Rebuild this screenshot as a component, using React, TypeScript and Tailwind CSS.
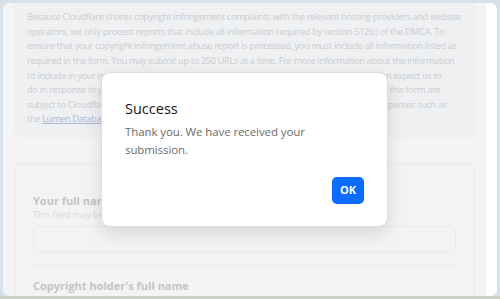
import React from 'react';

const INFO_LINES = [
  'Because Cloudflare shares copyright infringement complaints with the relevant hosting providers and website',
  'operators, we only process reports that include all information required by section 512(c) of the DMCA. To',
  'ensure that your copyright infringement abuse report is processed, you must include all information listed as',
  'required in the form. You may submit up to 250 URLs at a time. For more information about the information',
  'to include in your report, please do review our abuse reporting guidelines, and what you can expect us to',
  'do in response to your copyright complaint. Please note that all submissions made through this form are',
  "subject to Cloudflare's Privacy Policy, and they may also be shared with other relevant third parties such as",
];

function SuccessModal() {
  return (
    <div className="w-[287px] h-[155px] bg-white rounded-[9px] border border-[#dcdcdc] shadow-[0_6px_18px_rgba(0,0,0,0.12)] px-[23px] pt-[26px] pb-[22px] flex flex-col">
      <h2 className="text-[14.5px] leading-[20px] font-medium text-[#161616]">Success</h2>
      <p className="mt-[4px] text-[11.5px] leading-[18px] tracking-[-0.1px] text-[#6c6c6c]">
        Thank you. We have received your submission.
      </p>
      <div className="mt-auto flex justify-end">
        <button className="w-[32px] h-[27px] rounded-[5px] bg-[#0b6cff] text-white text-[11px] font-bold">
          OK
        </button>
      </div>
    </div>
  );
}

export default function App() {
  return (
    <div className="w-[500px] h-[299px] bg-[#d8e1ea] flex flex-col overflow-hidden font-['Open_Sans',sans-serif]">
      <div className="mt-[3px] mx-[3px] h-[293px] rounded-[7px] bg-white flex overflow-hidden">
        {/* Scroll area under the backdrop */}
        <div className="relative w-[483px] bg-[#f4f4f5] px-[11px] flex flex-col gap-[25px] overflow-hidden">
          {/* Info box */}
          <div className="shrink-0 bg-[#eff0f2] rounded-b-[8px] pl-[13px] pr-[8px] pt-[7px] pb-[11px] text-[9.2px] leading-[14.64px] tracking-[-0.33px] text-[#cbcdd1] whitespace-nowrap overflow-hidden">
            {INFO_LINES.map(line => (
              <div key={line}>{line}</div>
            ))}
            <div>
              the <span className="underline text-[#a9b7d5]">Lumen Database</span>.
            </div>
          </div>

          {/* Form card */}
          <div className="shrink-0 bg-[#f3f3f3] border border-[#ebebeb] rounded-[8px] px-[18px] pt-[29px]">
            <div className="text-[11px] leading-[15px] font-bold text-[#c4c4c4]">Your full name</div>
            <div className="text-[9px] leading-[13px] text-[#d9d9d9]">This field may be shared with the hosting provider and website operator.</div>
            <div className="mt-[5px] h-[27px] rounded-[5px] border border-[#eaeaea] bg-[#f3f3f3]" />
            <div className="mt-[12px] h-px bg-[#e9e9e9]" />
            <div className="mt-[12px] text-[11px] leading-[15px] font-bold text-[#c4c4c4]">Copyright holder's full name</div>
            <div className="text-[9px] leading-[13px] text-[#d9d9d9]">This field may be shared with the hosting provider and website operator.</div>
          </div>

          {/* Backdrop + modal */}
          <div className="absolute inset-0 flex items-center justify-center">
            <SuccessModal />
          </div>
        </div>
        <div className="flex-1 bg-white" />
      </div>
      <div className="mt-auto h-[3px] bg-[#cad3c3]" />
    </div>
  );
}
